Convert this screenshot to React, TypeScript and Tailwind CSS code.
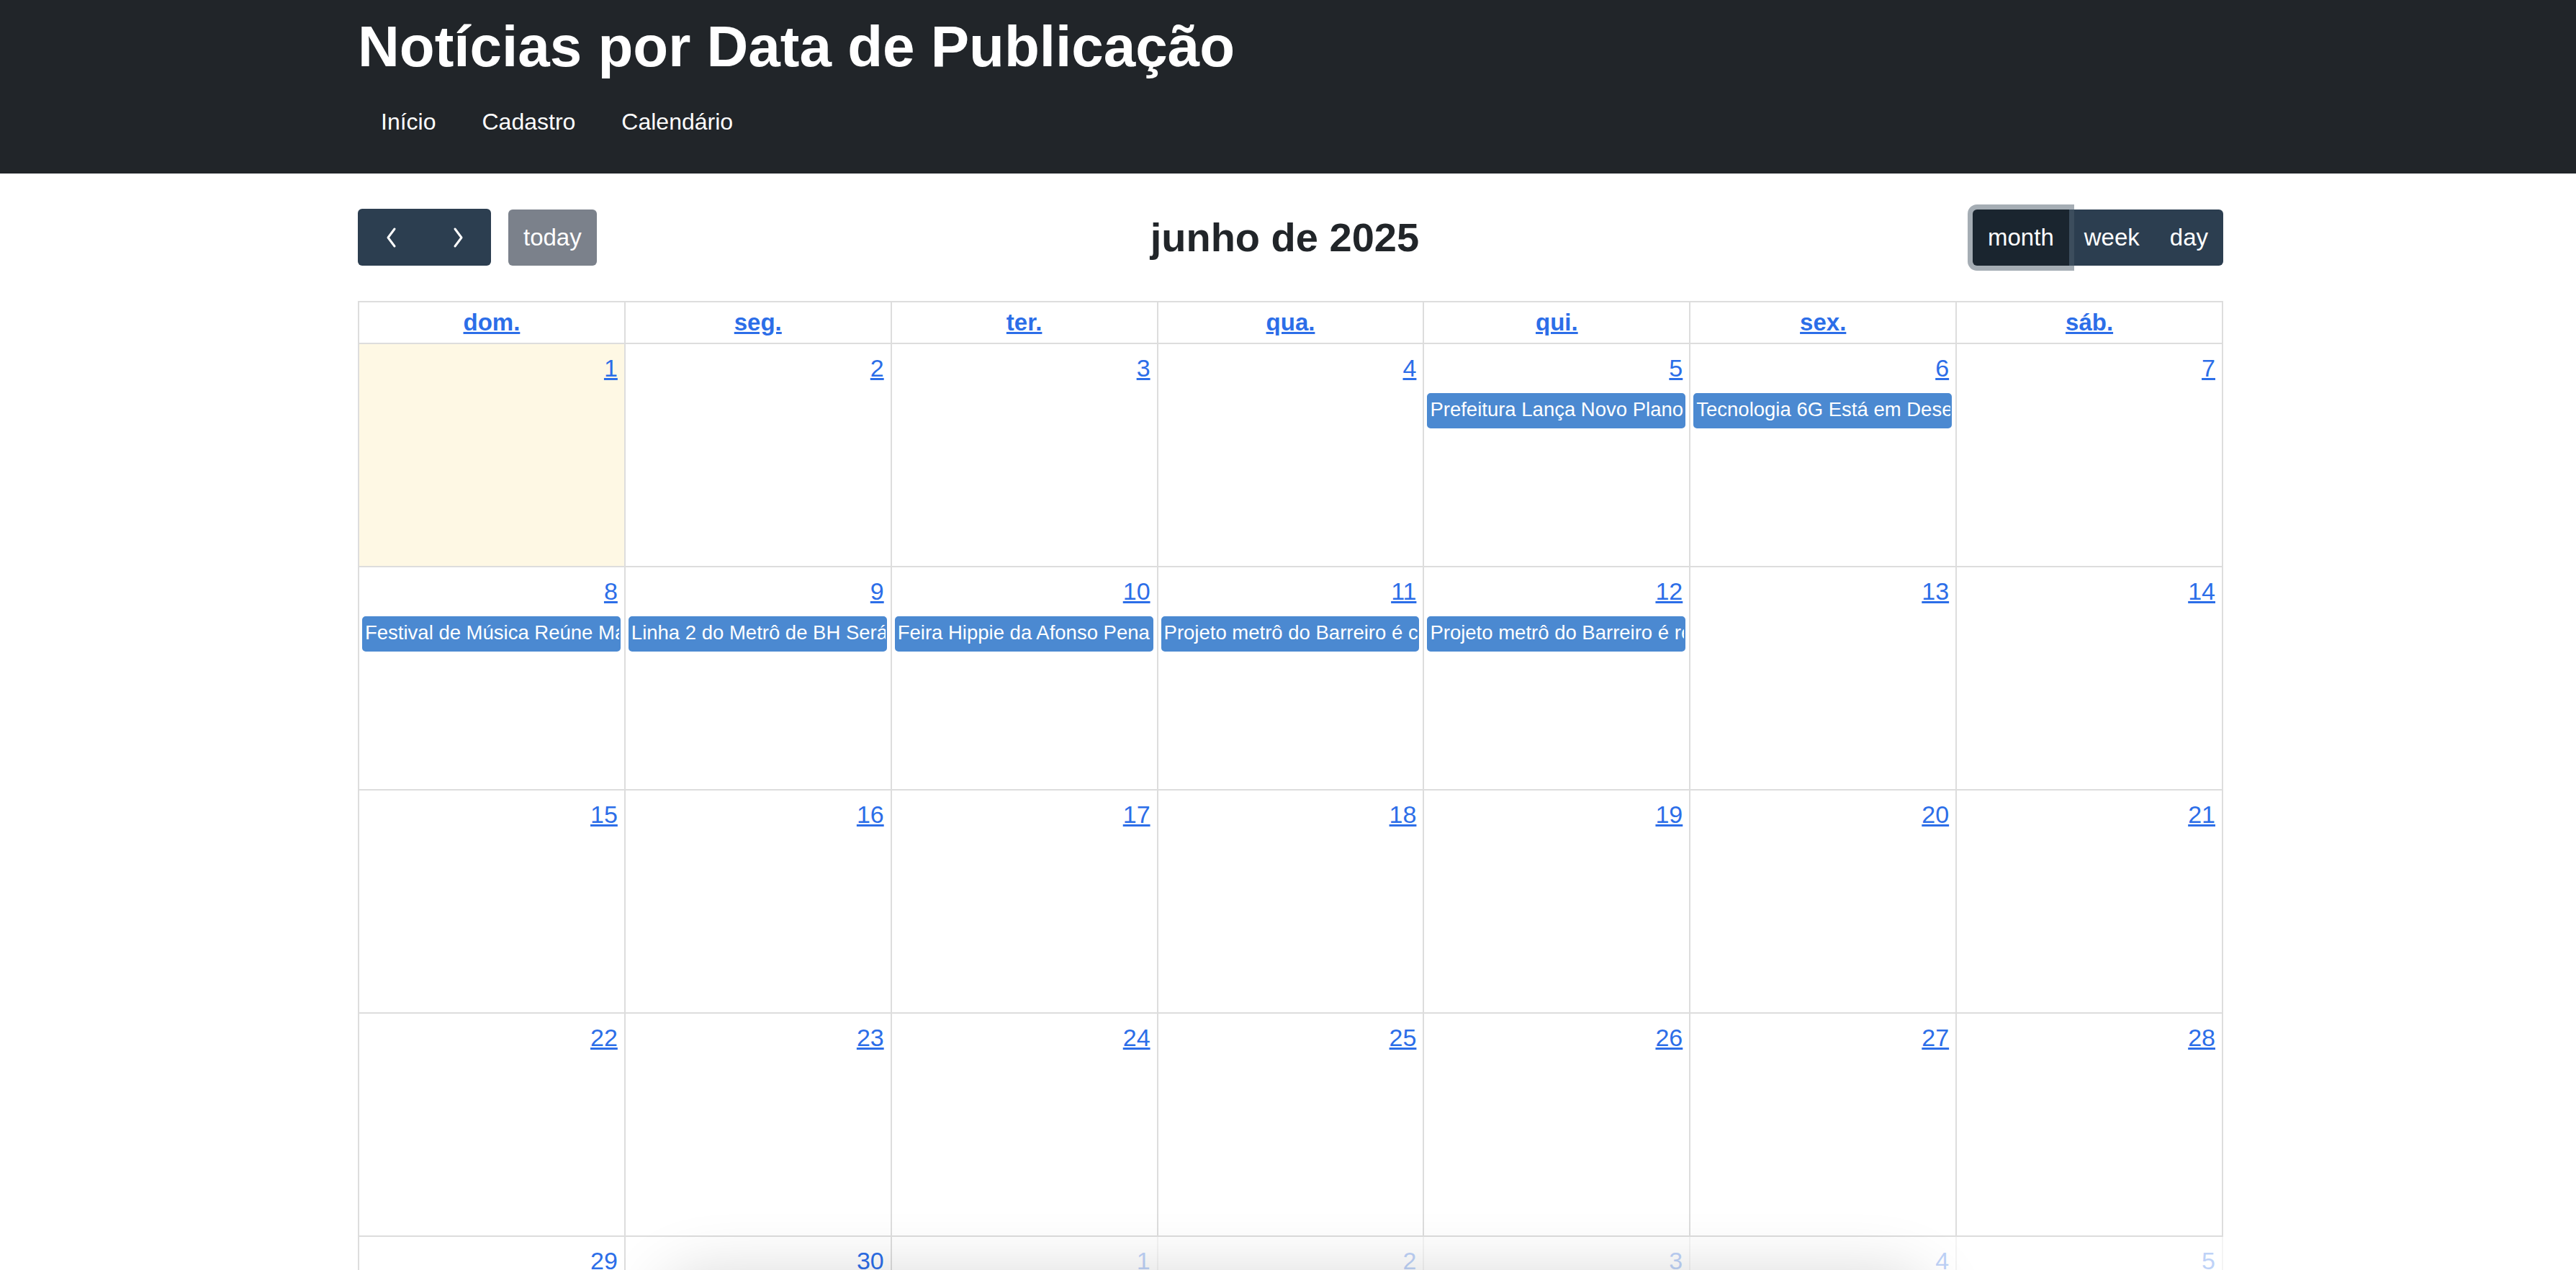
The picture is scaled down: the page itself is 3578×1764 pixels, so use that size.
type Day = { n: number; muted?: boolean; today?: boolean; events?: string[] };

const weeks: Day[][] = [
  [
    { n: 1, today: true },
    { n: 2 },
    { n: 3 },
    { n: 4 },
    { n: 5, events: ['Prefeitura Lança Novo Plano de Mobilidade Urbana'] },
    { n: 6, events: ['Tecnologia 6G Está em Desenvolvimento no Brasil'] },
    { n: 7 },
  ],
  [
    { n: 8, events: ['Festival de Música Reúne Mais de 50 Mil Pessoas'] },
    { n: 9, events: ['Linha 2 do Metrô de BH Será Construída'] },
    { n: 10, events: ['Feira Hippie da Afonso Pena Completa 55 Anos'] },
    { n: 11, events: ['Projeto metrô do Barreiro é cancelado'] },
    { n: 12, events: ['Projeto metrô do Barreiro é retomado'] },
    { n: 13 },
    { n: 14 },
  ],
  [15, 16, 17, 18, 19, 20, 21].map((n) => ({ n })),
  [22, 23, 24, 25, 26, 27, 28].map((n) => ({ n })),
  [{ n: 29 }, { n: 30 }, ...[1, 2, 3, 4, 5].map((n) => ({ n, muted: true }))],
  [6, 7, 8, 9, 10, 11, 12].map((n) => ({ n, muted: true })),
];

const weekdays = ['dom.', 'seg.', 'ter.', 'qua.', 'qui.', 'sex.', 'sáb.'];

function Chevron({ dir }: { dir: 'left' | 'right' }) {
  return (
    <svg width="18" height="30" viewBox="0 0 18 30" fill="none">
      <polyline
        points={dir === 'left' ? '13,3 4,15 13,27' : '5,3 14,15 5,27'}
        stroke="white"
        strokeWidth="3"
        strokeLinecap="round"
        strokeLinejoin="round"
      />
    </svg>
  );
}

function Toolbar() {
  return (
    <div className="flex items-center justify-between mb-[49px]">
      <div className="flex items-center">
        <div className="flex">
          <button className="w-[93px] h-[79px] flex items-center justify-center bg-[#2c3e50] rounded-l-[6px]">
            <Chevron dir="left" />
          </button>
          <button className="w-[92px] h-[79px] flex items-center justify-center bg-[#2c3e50] rounded-r-[6px]">
            <Chevron dir="right" />
          </button>
        </div>
        <button className="ml-[24px] h-[78px] px-[21px] bg-[#7b818b] text-white rounded-[6px] text-[33px] leading-[1.5]">
          today
        </button>
      </div>
      <h2 className="text-[56px] font-bold leading-[1.2] text-[#212529]">junho de 2025</h2>
      <div className="flex">
        <button className="relative z-10 h-[78px] px-[21px] bg-[#1a252f] text-white rounded-l-[6px] text-[33px] leading-[1.5] shadow-[0_0_0_7px_rgba(76,91,106,0.5)]">
          month
        </button>
        <button className="h-[78px] px-[21px] bg-[#2c3e50] text-white text-[33px] leading-[1.5]">week</button>
        <button className="h-[78px] px-[21px] bg-[#2c3e50] text-white rounded-r-[6px] text-[33px] leading-[1.5]">
          day
        </button>
      </div>
    </div>
  );
}

function DayCell({ day }: { day: Day }) {
  return (
    <div
      className={`h-[310px] border-r-2 border-b-2 border-[#dddddd] min-w-0 ${
        day.today ? 'bg-[#fef8e4]' : 'bg-white'
      } ${day.muted ? 'opacity-30' : ''}`}
    >
      <div className="flex justify-end p-[9px]">
        <a className="text-[34px] leading-[1.45] text-[#2c6ee8] underline">{day.n}</a>
      </div>
      {day.events?.map((e) => (
        <div
          key={e}
          className="mt-[1px] ml-[4px] mr-[5px] h-[49px] px-[2px] border-2 border-[#4b89d1] bg-[#4b89d1] rounded-[5px] overflow-hidden whitespace-nowrap text-white text-[27.5px] leading-[41px]"
        >
          {e}
        </div>
      ))}
    </div>
  );
}

export default function App() {
  return (
    <div className="min-h-screen bg-white font-['Liberation_Sans',Arial,sans-serif]">
      <header className="bg-[#212529] h-[241px]">
        <div className="ml-[497px] w-[2591px] pt-[17px]">
          <h1 className="text-[80px] font-bold leading-[1.2] text-white">Notícias por Data de Publicação</h1>
          <nav className="mt-[24px] flex">
            {['Início', 'Cadastro', 'Calendário'].map((l) => (
              <a key={l} className="px-[32px] py-[8px] text-[32px] leading-[1.55] text-white">
                {l}
              </a>
            ))}
          </nav>
        </div>
      </header>

      <main className="ml-[497px] w-[2591px] pt-[49px] pb-[80px]">
        <Toolbar />
        <div className="border-l-2 border-t-2 border-[#dddddd]">
          <div className="grid grid-cols-7">
            {weekdays.map((w) => (
              <div key={w} className="border-r-2 border-b-2 border-[#dddddd] py-[3px] text-center">
                <a className="text-[33px] leading-[1.5] font-bold text-[#2c6ee8] underline">{w}</a>
              </div>
            ))}
          </div>
          {weeks.map((wk, i) => (
            <div key={i} className="grid grid-cols-7">
              {wk.map((d, j) => (
                <DayCell key={j} day={d} />
              ))}
            </div>
          ))}
        </div>
      </main>

      {/* shadow of a panel sitting just below the fold */}
      <div className="fixed left-[960px] w-[1680px] top-[1810px] h-[200px] rounded-[20px] bg-white shadow-[0_0_90px_40px_rgba(0,0,0,0.16)]" />
    </div>
  );
}
